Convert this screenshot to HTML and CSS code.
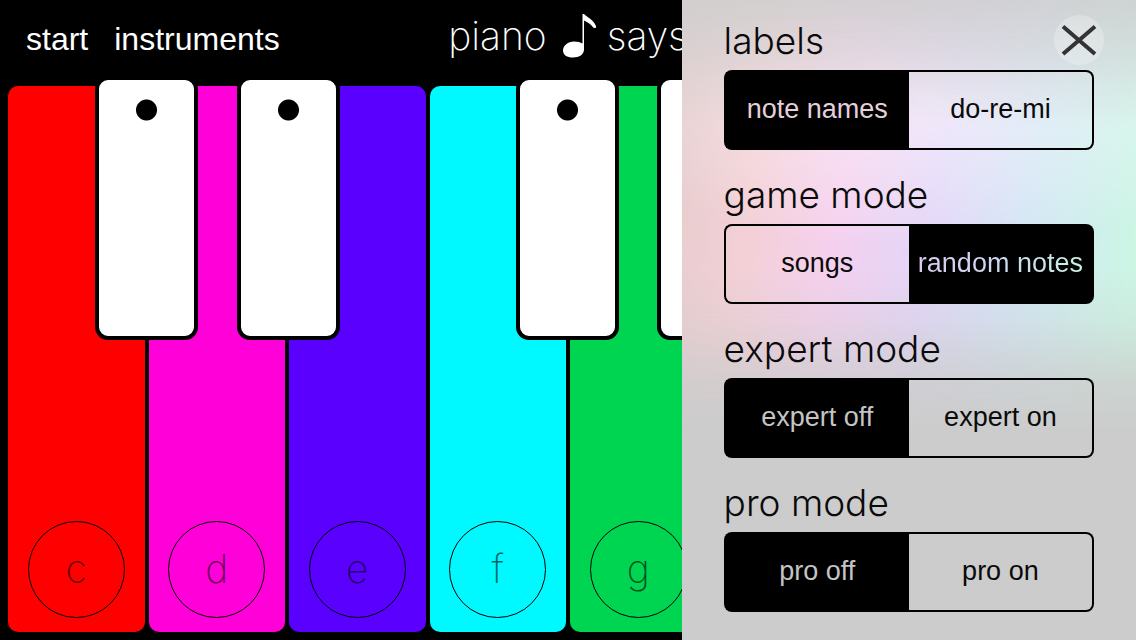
FILE: index.html
```html
<!DOCTYPE html>
<html lang="en">
<head>
<meta charset="utf-8">
<title>piano says</title>
<link rel="stylesheet" href="styles.css">
</head>
<body>
<main class="app">
  <header class="topbar">
    <nav class="menu">
      <button type="button">start</button>
      <button type="button">instruments</button>
    </nav>
    <h1 class="title">
      <span>piano</span>
      <svg class="note" viewBox="0 0 34 44" aria-hidden="true"><path d="M19.500 0H21c2 2.500 9.500 5.500 12 12 .5 2.500-1.500 2.500-3 1.200C28 10.500 25 8.500 21 6.500v29c0 5-4.700 8-11 8C4 43.500 0 41 0 36.500c0-5 5-9 11-9 3.500 0 6.500.8 8.500 2z"/></svg>
      <span>says</span>
    </h1>
  </header>
  <section class="keys" aria-label="keyboard">
    <div class="key key-c"><span class="label">c</span><button class="sharp" type="button" aria-label="c sharp"></button></div>
    <div class="key key-d"><span class="label">d</span><button class="sharp" type="button" aria-label="d sharp"></button></div>
    <div class="key key-e"><span class="label">e</span></div>
    <div class="key key-f"><span class="label">f</span><button class="sharp" type="button" aria-label="f sharp"></button></div>
    <div class="key key-g"><span class="label">g</span><button class="sharp" type="button" aria-label="g sharp"></button></div>
    <div class="key key-a"></div>
    <div class="key key-b"></div>
    <div class="key key-c"></div>
  </section>
  <aside class="panel">
    <button class="close" type="button" aria-label="close">
      <svg viewBox="0 0 50 50" aria-hidden="true"><path d="M9 11.500L41 39M41 11.500L9 39"/></svg>
    </button>
    <fieldset class="option">
      <legend>labels</legend>
      <div class="switch">
        <label><input type="radio" name="labels" checked><span class="warm">note names</span></label>
        <label><input type="radio" name="labels"><span>do-re-mi</span></label>
      </div>
    </fieldset>
    <fieldset class="option">
      <legend>game mode</legend>
      <div class="switch">
        <label><input type="radio" name="game"><span>songs</span></label>
        <label><input type="radio" name="game" checked><span class="cool">random notes</span></label>
      </div>
    </fieldset>
    <fieldset class="option">
      <legend>expert mode</legend>
      <div class="switch">
        <label><input type="radio" name="expert" checked><span>expert off</span></label>
        <label><input type="radio" name="expert"><span>expert on</span></label>
      </div>
    </fieldset>
    <fieldset class="option">
      <legend>pro mode</legend>
      <div class="switch">
        <label><input type="radio" name="pro" checked><span>pro off</span></label>
        <label><input type="radio" name="pro"><span>pro on</span></label>
      </div>
    </fieldset>
  </aside>
</main>
</body>
</html>
```
FILE: styles.css
```css
* { box-sizing: border-box; }
body {
  margin: 0;
  background: #000;
  font-family: "Liberation Sans", Arial, sans-serif;
}
button { font: inherit; border: 0; padding: 0; background: none; cursor: pointer; }

.app {
  position: relative;
  display: flex;
  flex-direction: column;
  min-height: 100vh;
  overflow: hidden;
}

.topbar {
  display: grid;
  grid-template-columns: 1fr auto 1fr;
  height: 86px;
  padding: 0 26px;
}
.menu { display: flex; gap: 26px; height: 78px; align-items: center; }
.menu button { color: #fff; font-size: 32px; }
.title {
  display: flex;
  margin: 0;
  height: 71px;
  align-items: center;
  color: #fff;
  font: 200 39px "Inter", "Liberation Sans", sans-serif;
}
.note { width: 34px; height: 44px; margin: 0 10px 0 16px; fill: #fff; }

.keys {
  flex: 1;
  display: grid;
  grid-template-columns: repeat(8, 1fr);
  gap: 4px;
  padding: 0 8px 8px;
}
.key {
  position: relative;
  display: flex;
  align-items: flex-end;
  justify-content: center;
  padding-bottom: 14px;
  border-radius: 10px;
}
.key-c { background: #ff0000; }
.key-d { background: #ff00d8; }
.key-e { background: #5a00ff; }
.key-f { background: #00f8ff; }
.key-g { background: #00d552; }
.key-a { background: #ffe600; }
.key-b { background: #ff8400; }
.label {
  display: flex;
  align-items: center;
  justify-content: center;
  width: 97px;
  height: 97px;
  padding-bottom: 3px;
  border: 1px solid #000;
  border-radius: 50%;
  color: rgba(0, 0, 0, .6);
  font: 200 39px "Inter", "Liberation Sans", sans-serif;
}
.sharp {
  position: absolute;
  z-index: 1;
  top: -10px;
  right: -53px;
  width: 103px;
  height: 264px;
  border: 4px solid #000;
  border-radius: 13px;
  background: radial-gradient(circle at 50% 30px, #000 10px, #fff 11px);
}
.key-d .sharp { right: -55px; }

.panel {
  position: absolute;
  z-index: 2;
  inset: 0 0 0 auto;
  width: 40%;
  display: flex;
  flex-direction: column;
  gap: 18px;
  padding: 14px 42px;
  background:
    linear-gradient(#cfcfcfe0 0, #cfcfcf80 9%, #cccccc00 20%, #cccccc00 42%, #cccccc40 50%, #cccccccc 60%, #ccc 67%),
    radial-gradient(ellipse 360px 150px at 55% 100px, #ffffff80, #ffffff00),
    linear-gradient(98deg, #e4cccc 0, #f3d0d6 18%, #f5d0ee 34%, #e2d6f8 52%, #d2e6f4 70%, #ccf6e4 90%);
}
.close {
  position: absolute;
  top: 15px;
  right: 32px;
  width: 50px;
  height: 50px;
  border-radius: 50%;
  background: rgba(255, 255, 255, .25);
}
.close svg { display: block; fill: none; stroke: #333; stroke-width: 4; }
.option { margin: 0; padding: 0; border: 0; min-width: 0; }
.option legend {
  padding: 0 0 2px;
  color: #0a0a0a;
  font: 300 37px/54px "Inter", "Liberation Sans", sans-serif;
}
.switch {
  display: grid;
  grid-template-columns: 1fr 1fr;
  height: 80px;
}
.switch label {
  position: relative;
  display: flex;
  align-items: center;
  justify-content: center;
  padding-bottom: 2px;
  border: 2px solid #000;
  color: #0a0a0a;
  font-size: 27px;
  white-space: nowrap;
  cursor: pointer;
}
.switch label:first-child { border-right: 0; border-radius: 8px 0 0 8px; }
.switch label:last-child { border-left: 0; border-radius: 0 8px 8px 0; }
.switch input { position: absolute; opacity: 0; }
.switch label:has(input:checked) { background: #000; color: #c4c4c4; }
.switch .warm { color: #e4d0da; }
.switch .cool {
  color: transparent;
  background: linear-gradient(90deg, #dccbf0, #cdd8f0 50%, #c8f2e4);
  background-clip: text;
}
```
